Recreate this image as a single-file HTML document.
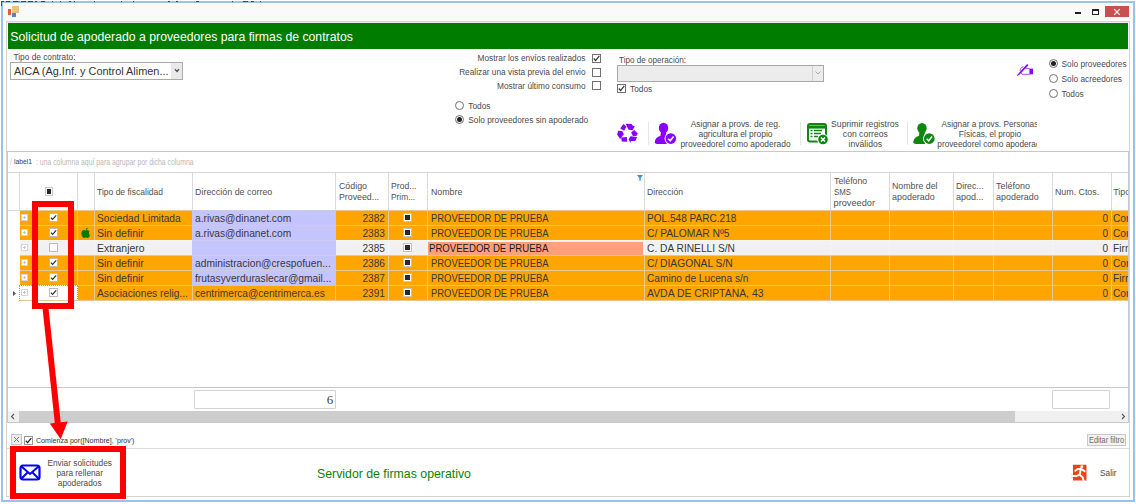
<!DOCTYPE html>
<html><head><meta charset="utf-8">
<style>
*{margin:0;padding:0;box-sizing:border-box}
html,body{width:1136px;height:504px;overflow:hidden;background:#fff;font-family:"Liberation Sans",sans-serif;color:#444}
.a{position:absolute}
.t{position:absolute;white-space:nowrap;line-height:1}
.cb{position:absolute;width:9px;height:9px;border:1px solid #707070;background:#fff}
.rd{position:absolute;width:9px;height:9px;border:1px solid #707070;border-radius:50%;background:#fff}
</style></head><body>
<div class="a" style="left:1px;top:1px;width:1134px;height:501px;background:#fff;border:2px solid #98c4ea"></div>
<div class="a" style="left:3px;top:4px;width:1130px;height:17px;background:#fafafa;"></div>
<svg class="a" style="left:0;top:0" width="1136" height="3"><path d="M2 1.5H4M6 1.5H10M13 1.5H18M18.5 1.5H19.5M21 1.5H26M28 1.5H33M35 1.5H37M41 1.5H45M52 1.5H53M60 1.5H61M69 1.5H71M74 1.5H75M94 1.5H95M121 1.5H122M133 1.5H134M168 1.5H170M176 1.5H178M196 1.5H199M232 1.5H233M243 1.5H248M251 1.5H254M260 1.5H261" stroke="#1a2a3a" stroke-width="1" opacity="0.8"/></svg>
<div class="a" style="left:1px;top:1px;width:1px;height:5px;background:#1a2a3a;opacity:0.7"></div>
<div class="a" style="left:12px;top:6px;width:7px;height:7px;background:#eac184;"></div>
<div class="a" style="left:8px;top:9px;width:3px;height:6px;background:#d9603a;"></div>
<div class="a" style="left:12px;top:13px;width:4px;height:4px;background:#4f86c6;"></div>
<div class="a" style="left:1075px;top:12px;width:6px;height:2px;background:#222;"></div>
<div class="a" style="left:1092px;top:9px;width:7px;height:6px;border:1px solid #222;border-top-width:2px"></div>
<div class="a" style="left:1105px;top:6px;width:24px;height:11px;background:#c75050;"></div>
<svg class="a" style="left:1113px;top:8px" width="8" height="8" viewBox="0 0 8 8"><path d="M1.2 1.2L6.8 6.8M6.8 1.2L1.2 6.8" stroke="#fff" stroke-width="1.1"/></svg>
<div class="a" style="left:6px;top:21px;width:1124px;height:476px;border:1px solid #d4d4d4;background:#fff"></div>
<div class="a" style="left:7px;top:22px;width:1122px;height:1px;background:#efe8f0;"></div>
<div class="a" style="left:8px;top:23px;width:1120px;height:26px;background:#007c00;"></div>
<div class="t" style="left:10.30px;top:31.00px;font-size:12.25px;color:#fff;">Solicitud de apoderado a proveedores para firmas de contratos</div>
<div class="t" style="left:13.50px;top:53.00px;font-size:8.3px;color:#4a4a4a;">Tipo de contrato:</div>
<div class="a" style="left:10px;top:62px;width:173px;height:18px;border:1px solid #aaaaaa;background:#fff"></div>
<div class="t" style="left:13.50px;top:66.00px;font-size:11.5px;color:#333;transform:scaleX(0.9478);transform-origin:left 50%;">AICA (Ag.Inf. y Control Alimen...</div>
<div class="a" style="left:171px;top:63px;width:11px;height:16px;background:#e9e9e9"></div>
<svg class="a" style="left:174px;top:68px" width="6" height="5" viewBox="0 0 6 5"><path d="M1 1.2L3 3.4L5 1.2" stroke="#555" fill="none" stroke-width="1.4"/></svg>
<div class="t" style="left:285.50px;width:300px;text-align:right;top:54.00px;font-size:8.3px;color:#4a4a4a;">Mostrar los envíos realizados</div>
<div class="cb" style="left:592px;top:54px"></div>
<svg class="a" style="left:593px;top:55px" width="7" height="7" viewBox="0 0 7 7"><path d="M0.8 3.5L2.6 5.5L6.3 0.8" stroke="#333" fill="none" stroke-width="1.2"/></svg>
<div class="t" style="left:285.50px;width:300px;text-align:right;top:68.00px;font-size:8.3px;color:#4a4a4a;">Realizar una vista previa del envio</div>
<div class="cb" style="left:592px;top:68px"></div>
<div class="t" style="left:285.50px;width:300px;text-align:right;top:82.00px;font-size:8.3px;color:#4a4a4a;">Mostrar último consumo</div>
<div class="cb" style="left:592px;top:81px"></div>
<div class="rd" style="left:455px;top:101px"></div>
<div class="t" style="left:468.30px;top:102.00px;font-size:8.3px;color:#4a4a4a;">Todos</div>
<div class="rd" style="left:455px;top:115px"></div>
<div class="a" style="left:457px;top:117px;width:5px;height:5px;background:#222;border-radius:50%"></div>
<div class="t" style="left:468.30px;top:116.00px;font-size:8.3px;color:#4a4a4a;">Solo proveedores sin apoderado</div>
<div class="t" style="left:619.40px;top:56.00px;font-size:8.3px;color:#4a4a4a;transform:scaleX(0.9789);transform-origin:left 50%;">Tipo de operación:</div>
<div class="a" style="left:617px;top:65px;width:207px;height:17px;border:1px solid #a8a8a8;background:#ececec"></div>
<div class="a" style="left:812px;top:66px;width:1px;height:15px;background:#d0d0d0;"></div>
<svg class="a" style="left:815px;top:71px" width="6" height="4" viewBox="0 0 6 4"><path d="M0.5 0.5L3 3L5.5 0.5" stroke="#aaa" fill="none" stroke-width="1"/></svg>
<div class="cb" style="left:617px;top:84px"></div>
<svg class="a" style="left:618px;top:85px" width="7" height="7" viewBox="0 0 7 7"><path d="M0.8 3.5L2.6 5.5L6.3 0.8" stroke="#333" fill="none" stroke-width="1.2"/></svg>
<div class="t" style="left:630.00px;top:85.00px;font-size:8.3px;color:#4a4a4a;">Todos</div>
<div class="rd" style="left:1049px;top:59.1px"></div>
<div class="a" style="left:1051px;top:61.1px;width:5px;height:5px;background:#222;border-radius:50%"></div>
<div class="t" style="left:1061.50px;top:60.00px;font-size:8.3px;color:#4a4a4a;">Solo proveedores</div>
<div class="rd" style="left:1049px;top:74.1px"></div>
<div class="t" style="left:1061.50px;top:75.00px;font-size:8.3px;color:#4a4a4a;">Solo acreedores</div>
<div class="rd" style="left:1049px;top:89.1px"></div>
<div class="t" style="left:1061.50px;top:90.00px;font-size:8.3px;color:#4a4a4a;">Todos</div>
<svg class="a" style="left:1012px;top:60px" width="28" height="20" viewBox="0 0 28 20"><g stroke="#8a00ff" fill="none"><path d="M15.3 5.2L7.5 13.5" stroke-width="1.8" stroke-linecap="round"/><path d="M7.2 13.8L5.2 15.5" stroke-width="1.1"/><path d="M11.5 6.5C9.5 7 8.2 9 8 11M13 8L17.8 8.8V14.3H10L9 12.8" stroke-width="0.9" opacity="0.8"/></g><rect x="17.9" y="8.6" width="3.1" height="5.7" fill="#8a00ff"/></svg>
<svg class="a" style="left:614px;top:121px" width="27" height="25" viewBox="0 0 27 25"><g fill="#8a00ff">
<path d="M6.2 7.4L9.4 3.1L12.4 5.5L10.2 9.7Z"/>
<path d="M11.9 2.7L17.6 3L18.5 4.5L20.8 5.3L18.6 9.2L14.6 8.7L12.8 5.2Z"/>
<path d="M17.1 11.4L20.3 8.9L23.8 12.4L22.3 14.9L18.9 14.9Z"/>
<path d="M16.4 15.3L23.1 15.9L21.3 19.9L16.9 19.9L16.4 21.8L14.6 18.4Z"/>
<path d="M7.2 16.6L12.9 16.1L13.2 20.8L7.7 20.5Z"/>
<path d="M4 9.8L8.2 9.9L9.9 13.2L6.2 17.9L3 13.5L3.6 12.2Z"/>
</g></svg>
<div class="a" style="left:648px;top:122px;width:1px;height:23px;background:#e6e6e6;"></div>
<svg class="a" style="left:654px;top:122px" width="23" height="23" viewBox="0 0 23 23"><g fill="#8a00ff">
<ellipse cx="9.5" cy="6" rx="4.7" ry="5.2"/>
<path d="M7 9.5H12L12.5 13.5C14 14 15 14.5 15.5 15.5L12.5 22H3.5C1.2 22 0.5 21 0.8 19.5C1.2 17 3 14.8 6.5 13.8Z"/>
<circle cx="16.8" cy="16.6" r="6.3" fill="#fff"/>
<circle cx="16.8" cy="16.6" r="5.3"/></g>
<path d="M14.2 16.8L16.2 18.8L19.6 14.6" stroke="#fff" stroke-width="1.6" fill="none"/></svg>
<div class="t" style="left:585.50px;width:300px;text-align:center;top:120.00px;font-size:8.45px;color:#4a4a4a;">Asignar a provs. de reg.</div>
<div class="t" style="left:585.50px;width:300px;text-align:center;top:130.00px;font-size:8.45px;color:#4a4a4a;">agricultura el propio</div>
<div class="t" style="left:585.50px;width:300px;text-align:center;top:140.00px;font-size:8.45px;color:#4a4a4a;">proveedorel como apoderado</div>
<div class="a" style="left:800px;top:122px;width:1px;height:23px;background:#e6e6e6;"></div>
<svg class="a" style="left:806px;top:122px" width="23" height="23" viewBox="0 0 23 23"><g fill="none" stroke="#0f870f">
<rect x="2" y="2" width="18" height="17.5" rx="2" stroke-width="2"/><path d="M2 5H20" stroke-width="3.2"/>
<path d="M4.5 8.5h2M8 8.5h8M4.5 11.5h2M8 11.5h7M4.5 14.5h2M8 14.5h4" stroke-width="1.4"/></g>
<circle cx="17" cy="17.5" r="5.8" fill="#fff"/><circle cx="17" cy="17.5" r="4.8" fill="#0f870f"/>
<path d="M15 15.5l4 4M19 15.5l-4 4" stroke="#fff" stroke-width="1.5"/></svg>
<div class="t" style="left:715.35px;width:300px;text-align:center;top:120.00px;font-size:8.6px;color:#4a4a4a;transform:scaleX(1.0077);transform-origin:center 50%;">Suprimir registros</div>
<div class="t" style="left:715.30px;width:300px;text-align:center;top:130.00px;font-size:8.6px;color:#4a4a4a;">con correos</div>
<div class="t" style="left:715.30px;width:300px;text-align:center;top:140.00px;font-size:8.6px;color:#4a4a4a;">inválidos</div>
<div class="a" style="left:907px;top:122px;width:1px;height:23px;background:#e6e6e6;"></div>
<svg class="a" style="left:912px;top:122px" width="24" height="23" viewBox="0 0 24 23"><g fill="#0f870f">
<ellipse cx="10" cy="6.2" rx="4.7" ry="5.2"/>
<path d="M7.5 9.5H12.5L13 13.5C14.5 14 15.5 14.5 16 15.5L13 22H4C1.7 22 1 21 1.3 19.5C1.7 17 3.5 14.8 7 13.8Z"/>
<circle cx="17.3" cy="16.6" r="6.3" fill="#fff"/>
<circle cx="17.3" cy="16.6" r="5.3"/></g>
<path d="M14.7 16.8L16.7 18.8L20.1 14.6" stroke="#fff" stroke-width="1.6" fill="none"/></svg>
<div class="a" style="left:936px;top:116px;width:101px;height:34px;overflow:hidden">
<div class="t" style="left:-96.10px;width:300px;text-align:center;top:5.00px;font-size:8.25px;color:#4a4a4a;">Asignar a provs. Personas</div>
<div class="t" style="left:-96.10px;width:300px;text-align:center;top:15.00px;font-size:8.25px;color:#4a4a4a;">Físicas, el propio</div>
<div class="t" style="left:-94.80px;width:300px;text-align:center;top:25.00px;font-size:8.25px;color:#4a4a4a;">proveedorel como apoderado</div>
</div>
<div class="a" style="left:7px;top:151px;width:1122px;height:272px;border:1px solid #c8c8c8;background:#fff"></div>
<div class="a" style="left:8px;top:172px;width:1120px;height:1px;background:#d4d4d4;"></div>
<div class="t" style="left:35.60px;top:158.00px;font-size:8.4px;color:#b8b8b8;transform:scaleX(0.8192);transform-origin:left 50%;">: una columna aquí para agrupar por dicha columna</div>
<div class="t" style="left:9.50px;top:158.00px;font-size:8.4px;color:#c8c8c8;transform:scaleX(0.8155);transform-origin:left 50%;">/</div>
<div class="a" style="left:12px;top:155px;width:22px;height:11px;background:#fff;"></div>
<div class="t" style="left:14.00px;top:158.00px;font-size:8.0px;color:#3a3a48;transform:scaleX(0.8430);transform-origin:left 50%;">label1</div>
<div class="a" style="left:19px;top:173px;width:1px;height:38px;background:#d9d9d9;"></div>
<div class="a" style="left:77px;top:173px;width:1px;height:38px;background:#d9d9d9;"></div>
<div class="a" style="left:94px;top:173px;width:1px;height:38px;background:#d9d9d9;"></div>
<div class="a" style="left:192px;top:173px;width:1px;height:38px;background:#d9d9d9;"></div>
<div class="a" style="left:335px;top:173px;width:1px;height:38px;background:#d9d9d9;"></div>
<div class="a" style="left:388px;top:173px;width:1px;height:38px;background:#d9d9d9;"></div>
<div class="a" style="left:427px;top:173px;width:1px;height:38px;background:#d9d9d9;"></div>
<div class="a" style="left:644px;top:173px;width:1px;height:38px;background:#d9d9d9;"></div>
<div class="a" style="left:830px;top:173px;width:1px;height:38px;background:#d9d9d9;"></div>
<div class="a" style="left:889px;top:173px;width:1px;height:38px;background:#d9d9d9;"></div>
<div class="a" style="left:953px;top:173px;width:1px;height:38px;background:#d9d9d9;"></div>
<div class="a" style="left:993px;top:173px;width:1px;height:38px;background:#d9d9d9;"></div>
<div class="a" style="left:1052px;top:173px;width:1px;height:38px;background:#d9d9d9;"></div>
<div class="a" style="left:1111px;top:173px;width:1px;height:38px;background:#d9d9d9;"></div>
<div class="a" style="left:8px;top:210px;width:12px;height:1px;background:#d9d9d9;"></div>
<div class="a" style="left:45px;top:187px;width:8px;height:9px;background:#fff;border:1px solid #cacaca"></div>
<div class="a" style="left:47px;top:189px;width:4px;height:5px;background:#262626;"></div>
<div class="t" style="left:97.00px;top:188.00px;font-size:9.2px;color:#505050;transform:scaleX(0.9276);transform-origin:left 50%;">Tipo de fiscalidad</div>
<div class="t" style="left:195.30px;top:188.00px;font-size:9.2px;color:#505050;transform:scaleX(0.9703);transform-origin:left 50%;">Dirección de correo</div>
<div class="t" style="left:339.00px;top:182.00px;font-size:9.2px;color:#505050;transform:scaleX(0.9604);transform-origin:left 50%;">Código</div>
<div class="t" style="left:339.00px;top:193.00px;font-size:9.2px;color:#505050;transform:scaleX(0.9562);transform-origin:left 50%;">Proveed...</div>
<div class="t" style="left:391.40px;top:182.00px;font-size:9.2px;color:#505050;transform:scaleX(0.9409);transform-origin:left 50%;">Prod...</div>
<div class="t" style="left:391.40px;top:193.00px;font-size:9.2px;color:#505050;transform:scaleX(0.9106);transform-origin:left 50%;">Prim...</div>
<div class="t" style="left:430.60px;top:188.00px;font-size:9.2px;color:#505050;transform:scaleX(0.9596);transform-origin:left 50%;">Nombre</div>
<div class="t" style="left:647.20px;top:188.00px;font-size:9.2px;color:#505050;transform:scaleX(0.9414);transform-origin:left 50%;">Dirección</div>
<div class="t" style="left:833.60px;top:177.00px;font-size:9.2px;color:#505050;transform:scaleX(0.9573);transform-origin:left 50%;">Teléfono</div>
<div class="t" style="left:833.60px;top:188.00px;font-size:9.2px;color:#505050;transform:scaleX(0.8527);transform-origin:left 50%;">SMS</div>
<div class="t" style="left:833.60px;top:199.00px;font-size:9.2px;color:#505050;">proveedor</div>
<div class="t" style="left:892.30px;top:182.00px;font-size:9.2px;color:#505050;transform:scaleX(0.9589);transform-origin:left 50%;">Nombre del</div>
<div class="t" style="left:892.30px;top:193.00px;font-size:9.2px;color:#505050;transform:scaleX(0.9728);transform-origin:left 50%;">apoderado</div>
<div class="t" style="left:956.10px;top:182.00px;font-size:9.2px;color:#505050;transform:scaleX(0.9473);transform-origin:left 50%;">Direc...</div>
<div class="t" style="left:956.10px;top:193.00px;font-size:9.2px;color:#505050;transform:scaleX(0.9810);transform-origin:left 50%;">apod...</div>
<div class="t" style="left:996.00px;top:182.00px;font-size:9.2px;color:#505050;transform:scaleX(0.9775);transform-origin:left 50%;">Teléfono</div>
<div class="t" style="left:996.00px;top:193.00px;font-size:9.2px;color:#505050;transform:scaleX(0.9728);transform-origin:left 50%;">apoderado</div>
<div class="t" style="left:1054.60px;top:188.00px;font-size:9.2px;color:#505050;transform:scaleX(0.9607);transform-origin:left 50%;">Num. Ctos.</div>
<div class="a" style="left:1112px;top:173px;width:16px;height:37px;overflow:hidden">
<div class="t" style="left:1.30px;top:15.00px;font-size:8.8px;color:#505050;">Tipo</div>
</div>
<svg class="a" style="left:637px;top:175px" width="6" height="6" viewBox="0 0 6 6"><path d="M0 0H6L3.6 3V6H2.4V3Z" fill="#2f8fd8"/></svg>
<div class="a" style="left:20px;top:210px;width:1108px;height:1px;background:#e6c992;"></div>
<div class="a" style="left:20px;top:211px;width:1108px;height:14px;background:#ffa500;"></div>
<div class="a" style="left:77px;top:211px;width:1px;height:14px;background:#e6c992;"></div>
<div class="a" style="left:94px;top:211px;width:1px;height:14px;background:#e6c992;"></div>
<div class="a" style="left:192px;top:211px;width:1px;height:14px;background:#e6c992;"></div>
<div class="a" style="left:335px;top:211px;width:1px;height:14px;background:#e6c992;"></div>
<div class="a" style="left:388px;top:211px;width:1px;height:14px;background:#e6c992;"></div>
<div class="a" style="left:427px;top:211px;width:1px;height:14px;background:#e6c992;"></div>
<div class="a" style="left:644px;top:211px;width:1px;height:14px;background:#e6c992;"></div>
<div class="a" style="left:830px;top:211px;width:1px;height:14px;background:#e6c992;"></div>
<div class="a" style="left:889px;top:211px;width:1px;height:14px;background:#e6c992;"></div>
<div class="a" style="left:953px;top:211px;width:1px;height:14px;background:#e6c992;"></div>
<div class="a" style="left:993px;top:211px;width:1px;height:14px;background:#e6c992;"></div>
<div class="a" style="left:1052px;top:211px;width:1px;height:14px;background:#e6c992;"></div>
<div class="a" style="left:1111px;top:211px;width:1px;height:14px;background:#e6c992;"></div>
<div class="a" style="left:192px;top:210px;width:144px;height:15px;background:#c4c4ff;"></div>
<div class="a" style="left:192px;top:210px;width:144px;height:1px;background:#cbcbe6;"></div>
<div class="a" style="left:21px;top:214px;width:7px;height:7px;background:#fff;border:1px solid #d4d4d4"></div>
<div class="a" style="left:23px;top:217px;width:3px;height:1px;background:#c8c8c8;"></div>
<div class="a" style="left:24px;top:216px;width:1px;height:3px;background:#c8c8c8;"></div>
<div class="a" style="left:49px;top:213px;width:9px;height:9px;background:#fff;border:1px solid #bcbcbc"></div>
<svg class="a" style="left:50px;top:214px" width="7" height="7" viewBox="0 0 7 7"><path d="M0.9 3.7L2.6 5.4L6.2 1.3" stroke="#2a2a2a" fill="none" stroke-width="1.1"/></svg>
<div class="t" style="left:96.80px;top:213.00px;font-size:11.3px;color:#383838;transform:scaleX(0.9002);transform-origin:left 50%;">Sociedad Limitada</div>
<div class="t" style="left:195.00px;top:213.00px;font-size:11.3px;color:#383838;transform:scaleX(0.9049);transform-origin:left 50%;">a.rivas@dinanet.com</div>
<div class="t" style="left:85.40px;width:300px;text-align:right;top:213.00px;font-size:11.3px;color:#383838;transform:scaleX(0.8950);transform-origin:right 50%;">2382</div>
<div class="a" style="left:403px;top:213px;width:9px;height:9px;background:#fff;border:1px solid #c4c4c4"></div>
<div class="a" style="left:405px;top:215px;width:5px;height:5px;background:#2a2a2a;"></div>
<div class="t" style="left:430.50px;top:213.00px;font-size:11.3px;color:#383838;transform:scaleX(0.8361);transform-origin:left 50%;">PROVEEDOR DE PRUEBA</div>
<div class="t" style="left:646.90px;top:213.00px;font-size:11.3px;color:#383838;transform:scaleX(0.8914);transform-origin:left 50%;">POL.548 PARC.218</div>
<div class="t" style="left:807.60px;width:300px;text-align:right;top:213.00px;font-size:11.3px;color:#383838;transform:scaleX(0.8910);transform-origin:right 50%;">0</div>
<div class="a" style="left:1112px;top:211px;width:16px;height:14px;overflow:hidden">
<div class="t" style="left:1.30px;top:2.00px;font-size:11.3px;color:#383838;transform:scaleX(0.9027);transform-origin:left 50%;">Cor</div>
</div>
<div class="a" style="left:20px;top:225px;width:1108px;height:1px;background:#e6c992;"></div>
<div class="a" style="left:20px;top:226px;width:1108px;height:14px;background:#ffa500;"></div>
<div class="a" style="left:77px;top:226px;width:1px;height:14px;background:#e6c992;"></div>
<div class="a" style="left:94px;top:226px;width:1px;height:14px;background:#e6c992;"></div>
<div class="a" style="left:192px;top:226px;width:1px;height:14px;background:#e6c992;"></div>
<div class="a" style="left:335px;top:226px;width:1px;height:14px;background:#e6c992;"></div>
<div class="a" style="left:388px;top:226px;width:1px;height:14px;background:#e6c992;"></div>
<div class="a" style="left:427px;top:226px;width:1px;height:14px;background:#e6c992;"></div>
<div class="a" style="left:644px;top:226px;width:1px;height:14px;background:#e6c992;"></div>
<div class="a" style="left:830px;top:226px;width:1px;height:14px;background:#e6c992;"></div>
<div class="a" style="left:889px;top:226px;width:1px;height:14px;background:#e6c992;"></div>
<div class="a" style="left:953px;top:226px;width:1px;height:14px;background:#e6c992;"></div>
<div class="a" style="left:993px;top:226px;width:1px;height:14px;background:#e6c992;"></div>
<div class="a" style="left:1052px;top:226px;width:1px;height:14px;background:#e6c992;"></div>
<div class="a" style="left:1111px;top:226px;width:1px;height:14px;background:#e6c992;"></div>
<div class="a" style="left:192px;top:225px;width:144px;height:15px;background:#c4c4ff;"></div>
<div class="a" style="left:192px;top:225px;width:144px;height:1px;background:#cbcbe6;"></div>
<div class="a" style="left:21px;top:229px;width:7px;height:7px;background:#fff;border:1px solid #d4d4d4"></div>
<div class="a" style="left:23px;top:232px;width:3px;height:1px;background:#c8c8c8;"></div>
<div class="a" style="left:24px;top:231px;width:1px;height:3px;background:#c8c8c8;"></div>
<div class="a" style="left:49px;top:228px;width:9px;height:9px;background:#fff;border:1px solid #bcbcbc"></div>
<svg class="a" style="left:50px;top:229px" width="7" height="7" viewBox="0 0 7 7"><path d="M0.9 3.7L2.6 5.4L6.2 1.3" stroke="#2a2a2a" fill="none" stroke-width="1.1"/></svg>
<div class="t" style="left:96.80px;top:228.00px;font-size:11.3px;color:#383838;transform:scaleX(0.9333);transform-origin:left 50%;">Sin definir</div>
<div class="t" style="left:195.00px;top:228.00px;font-size:11.3px;color:#383838;transform:scaleX(0.9049);transform-origin:left 50%;">a.rivas@dinanet.com</div>
<div class="t" style="left:85.40px;width:300px;text-align:right;top:228.00px;font-size:11.3px;color:#383838;transform:scaleX(0.8950);transform-origin:right 50%;">2383</div>
<div class="a" style="left:403px;top:228px;width:9px;height:9px;background:#fff;border:1px solid #c4c4c4"></div>
<div class="a" style="left:405px;top:230px;width:5px;height:5px;background:#2a2a2a;"></div>
<div class="t" style="left:430.50px;top:228.00px;font-size:11.3px;color:#383838;transform:scaleX(0.8361);transform-origin:left 50%;">PROVEEDOR DE PRUEBA</div>
<div class="t" style="left:646.90px;top:228.00px;font-size:11.3px;color:#383838;transform:scaleX(0.9109);transform-origin:left 50%;">C/ PALOMAR Nº5</div>
<div class="t" style="left:807.60px;width:300px;text-align:right;top:228.00px;font-size:11.3px;color:#383838;transform:scaleX(0.8910);transform-origin:right 50%;">0</div>
<div class="a" style="left:1112px;top:226px;width:16px;height:14px;overflow:hidden">
<div class="t" style="left:1.30px;top:2.00px;font-size:11.3px;color:#383838;transform:scaleX(0.9027);transform-origin:left 50%;">Cor</div>
</div>
<div class="a" style="left:20px;top:240px;width:1108px;height:1px;background:#f6f6f6;"></div>
<div class="a" style="left:20px;top:241px;width:1108px;height:14px;background:#f1f1f1;"></div>
<div class="a" style="left:77px;top:241px;width:1px;height:14px;background:#f6f6f6;"></div>
<div class="a" style="left:94px;top:241px;width:1px;height:14px;background:#f6f6f6;"></div>
<div class="a" style="left:192px;top:241px;width:1px;height:14px;background:#f6f6f6;"></div>
<div class="a" style="left:335px;top:241px;width:1px;height:14px;background:#f6f6f6;"></div>
<div class="a" style="left:388px;top:241px;width:1px;height:14px;background:#f6f6f6;"></div>
<div class="a" style="left:427px;top:241px;width:1px;height:14px;background:#f6f6f6;"></div>
<div class="a" style="left:644px;top:241px;width:1px;height:14px;background:#f6f6f6;"></div>
<div class="a" style="left:830px;top:241px;width:1px;height:14px;background:#f6f6f6;"></div>
<div class="a" style="left:889px;top:241px;width:1px;height:14px;background:#f6f6f6;"></div>
<div class="a" style="left:953px;top:241px;width:1px;height:14px;background:#f6f6f6;"></div>
<div class="a" style="left:993px;top:241px;width:1px;height:14px;background:#f6f6f6;"></div>
<div class="a" style="left:1052px;top:241px;width:1px;height:14px;background:#f6f6f6;"></div>
<div class="a" style="left:1111px;top:241px;width:1px;height:14px;background:#f6f6f6;"></div>
<div class="a" style="left:192px;top:240px;width:144px;height:15px;background:#c4c4ff;"></div>
<div class="a" style="left:192px;top:240px;width:144px;height:1px;background:#cbcbe6;"></div>
<div class="a" style="left:428px;top:242px;width:215px;height:13px;background:#ffa07a;"></div>
<div class="a" style="left:21px;top:244px;width:7px;height:7px;background:#fff;border:1px solid #d4d4d4"></div>
<div class="a" style="left:23px;top:247px;width:3px;height:1px;background:#c8c8c8;"></div>
<div class="a" style="left:24px;top:246px;width:1px;height:3px;background:#c8c8c8;"></div>
<div class="a" style="left:49px;top:243px;width:9px;height:9px;background:#fff;border:1px solid #bcbcbc"></div>
<div class="t" style="left:96.80px;top:243.00px;font-size:11.3px;color:#383838;transform:scaleX(0.9242);transform-origin:left 50%;">Extranjero</div>
<div class="t" style="left:85.40px;width:300px;text-align:right;top:243.00px;font-size:11.3px;color:#383838;transform:scaleX(0.8950);transform-origin:right 50%;">2385</div>
<div class="a" style="left:403px;top:243px;width:9px;height:9px;background:#fff;border:1px solid #c4c4c4"></div>
<div class="a" style="left:405px;top:245px;width:5px;height:5px;background:#2a2a2a;"></div>
<div class="t" style="left:428.60px;top:243.00px;font-size:10.8px;color:#1a1a1a;transform:scaleX(0.8882);transform-origin:left 50%;">PROVEEDOR DE PRUEBA</div>
<div class="t" style="left:646.90px;top:243.00px;font-size:11.3px;color:#383838;transform:scaleX(0.9041);transform-origin:left 50%;">C. DA RINELLI S/N</div>
<div class="t" style="left:807.60px;width:300px;text-align:right;top:243.00px;font-size:11.3px;color:#383838;transform:scaleX(0.8910);transform-origin:right 50%;">0</div>
<div class="a" style="left:1112px;top:241px;width:16px;height:14px;overflow:hidden">
<div class="t" style="left:1.30px;top:2.00px;font-size:11.3px;color:#383838;transform:scaleX(0.9027);transform-origin:left 50%;">Firr</div>
</div>
<div class="a" style="left:20px;top:255px;width:1108px;height:1px;background:#e6c992;"></div>
<div class="a" style="left:20px;top:256px;width:1108px;height:14px;background:#ffa500;"></div>
<div class="a" style="left:77px;top:256px;width:1px;height:14px;background:#e6c992;"></div>
<div class="a" style="left:94px;top:256px;width:1px;height:14px;background:#e6c992;"></div>
<div class="a" style="left:192px;top:256px;width:1px;height:14px;background:#e6c992;"></div>
<div class="a" style="left:335px;top:256px;width:1px;height:14px;background:#e6c992;"></div>
<div class="a" style="left:388px;top:256px;width:1px;height:14px;background:#e6c992;"></div>
<div class="a" style="left:427px;top:256px;width:1px;height:14px;background:#e6c992;"></div>
<div class="a" style="left:644px;top:256px;width:1px;height:14px;background:#e6c992;"></div>
<div class="a" style="left:830px;top:256px;width:1px;height:14px;background:#e6c992;"></div>
<div class="a" style="left:889px;top:256px;width:1px;height:14px;background:#e6c992;"></div>
<div class="a" style="left:953px;top:256px;width:1px;height:14px;background:#e6c992;"></div>
<div class="a" style="left:993px;top:256px;width:1px;height:14px;background:#e6c992;"></div>
<div class="a" style="left:1052px;top:256px;width:1px;height:14px;background:#e6c992;"></div>
<div class="a" style="left:1111px;top:256px;width:1px;height:14px;background:#e6c992;"></div>
<div class="a" style="left:192px;top:255px;width:144px;height:15px;background:#c4c4ff;"></div>
<div class="a" style="left:192px;top:255px;width:144px;height:1px;background:#cbcbe6;"></div>
<div class="a" style="left:21px;top:259px;width:7px;height:7px;background:#fff;border:1px solid #d4d4d4"></div>
<div class="a" style="left:23px;top:262px;width:3px;height:1px;background:#c8c8c8;"></div>
<div class="a" style="left:24px;top:261px;width:1px;height:3px;background:#c8c8c8;"></div>
<div class="a" style="left:49px;top:258px;width:9px;height:9px;background:#fff;border:1px solid #bcbcbc"></div>
<svg class="a" style="left:50px;top:259px" width="7" height="7" viewBox="0 0 7 7"><path d="M0.9 3.7L2.6 5.4L6.2 1.3" stroke="#2a2a2a" fill="none" stroke-width="1.1"/></svg>
<div class="t" style="left:96.80px;top:258.00px;font-size:11.3px;color:#383838;transform:scaleX(0.9333);transform-origin:left 50%;">Sin definir</div>
<div class="t" style="left:195.00px;top:258.00px;font-size:11.3px;color:#383838;transform:scaleX(0.9074);transform-origin:left 50%;">administracion@crespofuen...</div>
<div class="t" style="left:85.40px;width:300px;text-align:right;top:258.00px;font-size:11.3px;color:#383838;transform:scaleX(0.8950);transform-origin:right 50%;">2386</div>
<div class="a" style="left:403px;top:258px;width:9px;height:9px;background:#fff;border:1px solid #c4c4c4"></div>
<div class="a" style="left:405px;top:260px;width:5px;height:5px;background:#2a2a2a;"></div>
<div class="t" style="left:430.50px;top:258.00px;font-size:11.3px;color:#383838;transform:scaleX(0.8361);transform-origin:left 50%;">PROVEEDOR DE PRUEBA</div>
<div class="t" style="left:646.90px;top:258.00px;font-size:11.3px;color:#383838;transform:scaleX(0.9079);transform-origin:left 50%;">C/ DIAGONAL S/N</div>
<div class="t" style="left:807.60px;width:300px;text-align:right;top:258.00px;font-size:11.3px;color:#383838;transform:scaleX(0.8910);transform-origin:right 50%;">0</div>
<div class="a" style="left:1112px;top:256px;width:16px;height:14px;overflow:hidden">
<div class="t" style="left:1.30px;top:2.00px;font-size:11.3px;color:#383838;transform:scaleX(0.9027);transform-origin:left 50%;">Cor</div>
</div>
<div class="a" style="left:20px;top:270px;width:1108px;height:1px;background:#e6c992;"></div>
<div class="a" style="left:20px;top:271px;width:1108px;height:14px;background:#ffa500;"></div>
<div class="a" style="left:77px;top:271px;width:1px;height:14px;background:#e6c992;"></div>
<div class="a" style="left:94px;top:271px;width:1px;height:14px;background:#e6c992;"></div>
<div class="a" style="left:192px;top:271px;width:1px;height:14px;background:#e6c992;"></div>
<div class="a" style="left:335px;top:271px;width:1px;height:14px;background:#e6c992;"></div>
<div class="a" style="left:388px;top:271px;width:1px;height:14px;background:#e6c992;"></div>
<div class="a" style="left:427px;top:271px;width:1px;height:14px;background:#e6c992;"></div>
<div class="a" style="left:644px;top:271px;width:1px;height:14px;background:#e6c992;"></div>
<div class="a" style="left:830px;top:271px;width:1px;height:14px;background:#e6c992;"></div>
<div class="a" style="left:889px;top:271px;width:1px;height:14px;background:#e6c992;"></div>
<div class="a" style="left:953px;top:271px;width:1px;height:14px;background:#e6c992;"></div>
<div class="a" style="left:993px;top:271px;width:1px;height:14px;background:#e6c992;"></div>
<div class="a" style="left:1052px;top:271px;width:1px;height:14px;background:#e6c992;"></div>
<div class="a" style="left:1111px;top:271px;width:1px;height:14px;background:#e6c992;"></div>
<div class="a" style="left:192px;top:270px;width:144px;height:15px;background:#c4c4ff;"></div>
<div class="a" style="left:192px;top:270px;width:144px;height:1px;background:#cbcbe6;"></div>
<div class="a" style="left:21px;top:274px;width:7px;height:7px;background:#fff;border:1px solid #d4d4d4"></div>
<div class="a" style="left:23px;top:277px;width:3px;height:1px;background:#c8c8c8;"></div>
<div class="a" style="left:24px;top:276px;width:1px;height:3px;background:#c8c8c8;"></div>
<div class="a" style="left:49px;top:273px;width:9px;height:9px;background:#fff;border:1px solid #bcbcbc"></div>
<svg class="a" style="left:50px;top:274px" width="7" height="7" viewBox="0 0 7 7"><path d="M0.9 3.7L2.6 5.4L6.2 1.3" stroke="#2a2a2a" fill="none" stroke-width="1.1"/></svg>
<div class="t" style="left:96.80px;top:273.00px;font-size:11.3px;color:#383838;transform:scaleX(0.9333);transform-origin:left 50%;">Sin definir</div>
<div class="t" style="left:195.00px;top:273.00px;font-size:11.3px;color:#383838;transform:scaleX(0.9077);transform-origin:left 50%;">frutasyverduraslecar@gmail...</div>
<div class="t" style="left:85.40px;width:300px;text-align:right;top:273.00px;font-size:11.3px;color:#383838;transform:scaleX(0.8950);transform-origin:right 50%;">2387</div>
<div class="a" style="left:403px;top:273px;width:9px;height:9px;background:#fff;border:1px solid #c4c4c4"></div>
<div class="a" style="left:405px;top:275px;width:5px;height:5px;background:#2a2a2a;"></div>
<div class="t" style="left:430.50px;top:273.00px;font-size:11.3px;color:#383838;transform:scaleX(0.8361);transform-origin:left 50%;">PROVEEDOR DE PRUEBA</div>
<div class="t" style="left:646.90px;top:273.00px;font-size:11.3px;color:#383838;transform:scaleX(0.8976);transform-origin:left 50%;">Camino de Lucena s/n</div>
<div class="t" style="left:807.60px;width:300px;text-align:right;top:273.00px;font-size:11.3px;color:#383838;transform:scaleX(0.8910);transform-origin:right 50%;">0</div>
<div class="a" style="left:1112px;top:271px;width:16px;height:14px;overflow:hidden">
<div class="t" style="left:1.30px;top:2.00px;font-size:11.3px;color:#383838;transform:scaleX(0.9027);transform-origin:left 50%;">Firr</div>
</div>
<div class="a" style="left:20px;top:285px;width:1108px;height:1px;background:#e6c992;"></div>
<div class="a" style="left:20px;top:286px;width:1108px;height:14px;background:#ffa500;"></div>
<div class="a" style="left:77px;top:286px;width:1px;height:14px;background:#e6c992;"></div>
<div class="a" style="left:94px;top:286px;width:1px;height:14px;background:#e6c992;"></div>
<div class="a" style="left:192px;top:286px;width:1px;height:14px;background:#e6c992;"></div>
<div class="a" style="left:335px;top:286px;width:1px;height:14px;background:#e6c992;"></div>
<div class="a" style="left:388px;top:286px;width:1px;height:14px;background:#e6c992;"></div>
<div class="a" style="left:427px;top:286px;width:1px;height:14px;background:#e6c992;"></div>
<div class="a" style="left:644px;top:286px;width:1px;height:14px;background:#e6c992;"></div>
<div class="a" style="left:830px;top:286px;width:1px;height:14px;background:#e6c992;"></div>
<div class="a" style="left:889px;top:286px;width:1px;height:14px;background:#e6c992;"></div>
<div class="a" style="left:953px;top:286px;width:1px;height:14px;background:#e6c992;"></div>
<div class="a" style="left:993px;top:286px;width:1px;height:14px;background:#e6c992;"></div>
<div class="a" style="left:1052px;top:286px;width:1px;height:14px;background:#e6c992;"></div>
<div class="a" style="left:1111px;top:286px;width:1px;height:14px;background:#e6c992;"></div>
<div class="a" style="left:19px;top:285px;width:59px;height:16px;background:#fff;border:1px dotted #9a9a9a"></div>
<div class="a" style="left:20px;top:300px;width:1108px;height:1px;background:#e6c992;"></div>
<div class="a" style="left:21px;top:289px;width:7px;height:7px;background:#fff;border:1px solid #d4d4d4"></div>
<div class="a" style="left:23px;top:292px;width:3px;height:1px;background:#c8c8c8;"></div>
<div class="a" style="left:24px;top:291px;width:1px;height:3px;background:#c8c8c8;"></div>
<div class="a" style="left:49px;top:288px;width:9px;height:9px;background:#fff;border:1px solid #bcbcbc"></div>
<svg class="a" style="left:50px;top:289px" width="7" height="7" viewBox="0 0 7 7"><path d="M0.9 3.7L2.6 5.4L6.2 1.3" stroke="#2a2a2a" fill="none" stroke-width="1.1"/></svg>
<div class="t" style="left:96.80px;top:288.00px;font-size:11.3px;color:#383838;transform:scaleX(0.9045);transform-origin:left 50%;">Asociaciones relig...</div>
<div class="t" style="left:195.00px;top:288.00px;font-size:11.3px;color:#383838;transform:scaleX(0.8976);transform-origin:left 50%;">centrimerca@centrimerca.es</div>
<div class="t" style="left:85.40px;width:300px;text-align:right;top:288.00px;font-size:11.3px;color:#383838;transform:scaleX(0.8950);transform-origin:right 50%;">2391</div>
<div class="a" style="left:403px;top:288px;width:9px;height:9px;background:#fff;border:1px solid #c4c4c4"></div>
<div class="a" style="left:405px;top:290px;width:5px;height:5px;background:#2a2a2a;"></div>
<div class="t" style="left:430.50px;top:288.00px;font-size:11.3px;color:#383838;transform:scaleX(0.8361);transform-origin:left 50%;">PROVEEDOR DE PRUEBA</div>
<div class="t" style="left:646.90px;top:288.00px;font-size:11.3px;color:#383838;transform:scaleX(0.9214);transform-origin:left 50%;">AVDA DE CRIPTANA, 43</div>
<div class="t" style="left:807.60px;width:300px;text-align:right;top:288.00px;font-size:11.3px;color:#383838;transform:scaleX(0.8910);transform-origin:right 50%;">0</div>
<div class="a" style="left:1112px;top:286px;width:16px;height:14px;overflow:hidden">
<div class="t" style="left:1.30px;top:2.00px;font-size:11.3px;color:#383838;transform:scaleX(0.9027);transform-origin:left 50%;">Cor</div>
</div>
<svg class="a" style="left:13px;top:291px" width="3" height="5" viewBox="0 0 3 5"><path d="M0 0L3 2.5L0 5Z" fill="#555"/></svg>
<svg class="a" style="left:81px;top:227px" width="10" height="12" viewBox="0 0 10 12"><path d="M4.6 3.6C3.2 2.6 0.6 2.8 0.4 6 0.3 8.6 1.8 11 3 11 3.8 11 4 10.6 4.8 10.6 5.6 10.6 5.8 11 6.6 11 7.6 11 8.6 9.4 9 8.2 7.6 7.6 7.4 5.6 8.6 4.6 7.6 3 5.8 3 4.6 3.6Z" fill="#007a00"/><path d="M4.8 3.2C4.8 2 5.6 1 6.8 0.8 6.8 2 6 3 4.8 3.2Z" fill="#007a00"/></svg>
<div class="a" style="left:8px;top:387px;width:1120px;height:1px;background:#c8c8c8;"></div>
<div class="a" style="left:194px;top:390px;width:142px;height:19px;background:#fff;border:1px solid #d2d2d2;border-radius:1px"></div>
<div class="t" style="left:33.30px;width:300px;text-align:right;top:393.00px;font-size:13px;color:#404040;font-family:'Liberation Serif',serif">6</div>
<div class="a" style="left:1052px;top:390px;width:58px;height:19px;background:#fff;border:1px solid #d2d2d2;border-radius:1px"></div>
<div class="a" style="left:8px;top:411px;width:1120px;height:11px;background:#f0f0f0;"></div>
<div class="a" style="left:19px;top:411px;width:996px;height:11px;background:#cdcdcd;"></div>
<svg class="a" style="left:10px;top:413px" width="6" height="7" viewBox="0 0 6 7"><path d="M4 1L1.5 3.5L4 6" stroke="#555" fill="none" stroke-width="1.1"/></svg>
<svg class="a" style="left:1120px;top:413px" width="6" height="7" viewBox="0 0 6 7"><path d="M2 1L4.5 3.5L2 6" stroke="#555" fill="none" stroke-width="1.1"/></svg>
<div class="a" style="left:7px;top:448px;width:1122px;height:1px;background:#dcdcdc;"></div>
<div class="a" style="left:11px;top:434px;width:11px;height:11px;background:#ececec;border:1px solid #c8c8c8"></div>
<svg class="a" style="left:13px;top:436px" width="7" height="7" viewBox="0 0 7 7"><path d="M1 1L6 6M6 1L1 6" stroke="#777" stroke-width="1"/></svg>
<div class="a" style="left:24px;top:436px;width:9px;height:9px;background:#fff;border:1px solid #999"></div>
<svg class="a" style="left:25px;top:437px" width="7" height="7" viewBox="0 0 7 7"><path d="M0.8 3.8L2.6 5.6L6.3 1.2" stroke="#222" fill="none" stroke-width="1.3"/></svg>
<div class="t" style="left:35.60px;top:437.00px;font-size:7.9px;color:#333;transform:scaleX(0.8988);transform-origin:left 50%;">Comienza por([Nombre], 'prov')</div>
<div class="a" style="left:1087px;top:434px;width:39px;height:12px;background:#f2f2f2;border:1px solid #c8c8c8"></div>
<div class="t" style="left:1088.80px;top:437.00px;font-size:8.2px;color:#6a6a6a;transform:scaleX(0.8931);transform-origin:left 50%;">Editar filtro</div>
<div class="t" style="left:-70.30px;width:300px;text-align:center;top:459.00px;font-size:8.3px;color:#4a4a4a;">Enviar solicitudes</div>
<div class="t" style="left:-70.30px;width:300px;text-align:center;top:469.00px;font-size:8.3px;color:#4a4a4a;">para rellenar</div>
<div class="t" style="left:-70.30px;width:300px;text-align:center;top:479.00px;font-size:8.3px;color:#4a4a4a;">apoderados</div>
<svg class="a" style="left:19px;top:464px" width="23" height="17" viewBox="0 0 23 17"><rect x="1.5" y="1.5" width="19" height="14" rx="2.5" fill="none" stroke="#0000ff" stroke-width="2.2"/><path d="M2.5 2.5L11 10L19.5 2.5M2.5 14.5L8.5 8.5M19.5 14.5L13.5 8.5" fill="none" stroke="#0000ff" stroke-width="2"/></svg>
<div class="t" style="left:316.80px;top:467.00px;font-size:13.1px;color:#0d800d;transform:scaleX(0.9400);transform-origin:left 50%;">Servidor de firmas operativo</div>
<svg class="a" style="left:1071px;top:464px" width="17" height="17" viewBox="0 0 17 17"><path d="M2 0.8H15.5V16.5H2V13.2H0.2V10.8H2Z" fill="#e8461a"/><circle cx="10.8" cy="2.7" r="1.4" fill="#fff"/><path d="M10 4.2L8.6 10.6M4.3 6.8L6.8 4.9L10.2 5L13.6 7.2M8.6 10.6L5.6 12H0.6M8.6 10.6L11.6 13.2L12.6 16.6" stroke="#fff" stroke-width="1.9" fill="none" stroke-linecap="round"/></svg>
<div class="t" style="left:1100.00px;top:469.00px;font-size:8.3px;color:#4a4a4a;">Salir</div>
<div class="a" style="left:32px;top:201px;width:42px;height:108px;background:transparent;border:6px solid #ff0000"></div>
<div class="a" style="left:10px;top:446px;width:116px;height:53px;background:transparent;border:6px solid #ff0000"></div>
<svg class="a" style="left:0;top:0" width="1136" height="504" viewBox="0 0 1136 504"><path d="M45.5 308L57.8 423" stroke="#ff0000" stroke-width="6"/><path d="M49.8 423.4L67.7 421.4L60.7 439.3Z" fill="#ff0000"/></svg>
</body></html>
